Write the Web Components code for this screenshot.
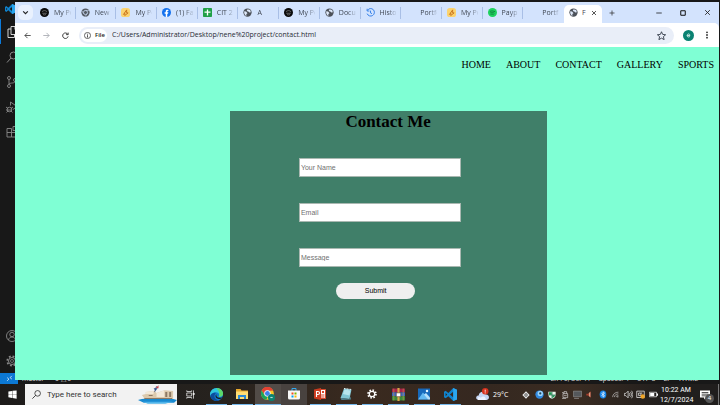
<!DOCTYPE html>
<html lang="en">
<head>
<meta charset="utf-8">
<title>Contact</title>
<style>
body { margin: 0; background: #181818; }
</style>
</head>
<body>
<desk-top></desk-top>
<script>
const ICONS = {
  vscode: '<path fill="#0f84cf" d="M17 0l7 3v18l-7 3L8 15l-5 4-3-2V7l3-2 5 4zM17 7l-6 5 6 5zM3 9v6l3-3z"/><path fill="#2ba6ee" d="M17 0l7 3v18l-7 3z"/>',
  files: '<path fill="none" stroke="#e8e8e8" stroke-width="1.8" d="M8 1h9l5 5v11H8zM16 1v6h6M8 6H2v17h13v-6"/>',
  search: '<circle cx="15" cy="9" r="7" fill="none" stroke="currentColor" stroke-width="2"/><path stroke="currentColor" stroke-width="2" d="M10 14l-8 9"/>',
  git: '<g fill="none" stroke="currentColor" stroke-width="1.8"><circle cx="6" cy="4" r="3"/><circle cx="6" cy="20" r="3"/><circle cx="18" cy="8" r="3"/><path d="M6 7v10M18 11c0 4-9 2-12 5"/></g>',
  debug: '<g fill="none" stroke="currentColor" stroke-width="1.8"><path d="M9 9V2l13 9-8 6"/><circle cx="7" cy="17" r="4.500"/><path d="M0 12l4 3M0 18h12M1 23l3-3M13 23l-3-3M14 12l-4 3"/></g>',
  ext: '<path fill="none" stroke="currentColor" stroke-width="1.8" d="M2 5h9v17H2zM2 13h18v9H11M14 1h8v8h-8z"/>',
  account: '<g fill="none" stroke="currentColor" stroke-width="1.8"><circle cx="12" cy="12" r="11"/><circle cx="12" cy="9" r="4.500"/><path d="M5 20c1-8 13-8 14 0"/></g>',
  gear: '<g fill="none" stroke="currentColor"><circle cx="12" cy="12" r="7" stroke-width="2"/><circle cx="12" cy="12" r="3" stroke-width="1.500"/><circle cx="12" cy="12" r="9.500" stroke-width="3.500" stroke-dasharray="3.730 3.730"/></g>',
  remote: '<path fill="none" stroke="#fff" stroke-width="2.500" d="M4 9l6 5-6 6M20 3l-6 6 6 5"/>',
  chevron: '<path fill="none" stroke="#222" stroke-width="4" d="M4 8l8 8 8-8"/>',
  black: '<circle cx="12" cy="12" r="12" fill="#0a0a0a"/><path fill="none" stroke="#8d8d8d" stroke-width="1.800" d="M5 10c4-4 10-4 14 0M6 14h12M8 17c3 2 5 2 8 0"/>',
  chrome: '<circle cx="12" cy="12" r="11" fill="#555b64"/><circle cx="12" cy="12" r="5.500" fill="#555b64" stroke="#d3e3fd" stroke-width="2"/><path stroke="#d3e3fd" stroke-width="1.500" d="M12 6.500h10M7 15L2 7M16 15l-5 8"/>',
  globe: '<circle cx="12" cy="12" r="11" fill="#4c5159"/><path fill="#dde7f8" d="M4 8l5 2 3 4-3 2v5l-3-2-3-6zM12 3l7 2 2 6-4 1-3-3-4-1z"/>',
  moodle: '<rect width="24" height="24" rx="7" fill="#fbd36f"/><path fill="none" stroke="#c9731b" stroke-width="2.500" d="M6 18L15 5v8h4L10 20v-7"/>',
  facebook: '<circle cx="12" cy="12" r="12" fill="#1371ee"/><path fill="#fff" d="M10 24v-9H7v-4h3V9c0-4 2-5 7-4v3c-3 0-3 0-3 3h3l-1 4h-2v9z"/>',
  sheets: '<rect width="24" height="24" rx="2" fill="#21a047"/><path stroke="#fff" stroke-width="3.500" d="M12 4v16M4 11h16"/>',
  history: '<path fill="none" stroke="#2e7ce8" stroke-width="2.500" d="M4 6a10 10 0 1 1-1 9M3 2v6h6M12 7v6l4 2"/>',
  spotify: '<circle cx="12" cy="12" r="12" fill="#1ed35e"/><path fill="none" stroke="#0c6e38" stroke-width="2" d="M5 9c5-2 10-1 14 1M6 13c5-1 8-1 11 1M7 17c3-1 6-1 8 1"/>',
  close: '<path stroke="#222" stroke-width="3" d="M4 4l16 16M20 4L4 20"/>',
  plus: '<path stroke="#333" stroke-width="3" d="M12 2v20M2 12h20"/>',
  min: '<path stroke="#111" stroke-width="3" d="M1 12h22"/>',
  max: '<path fill="none" stroke="#111" stroke-width="4" d="M3 3h18v18H3z"/>',
  back: '<path fill="none" stroke="#444" stroke-width="3" d="M23 12H3M12 3l-9 9 9 9"/>',
  fwd: '<path fill="none" stroke="#a9acb2" stroke-width="3" d="M1 12h20M12 3l9 9-9 9"/>',
  reload: '<path fill="none" stroke="#333" stroke-width="3.200" d="M20 8a9.500 9.500 0 1 0 1 7M21 2v7h-7"/>',
  info: '<circle cx="12" cy="12" r="10.500" fill="none" stroke="#333" stroke-width="2.500"/><path stroke="#333" stroke-width="3" d="M12 6v3M12 11v8"/>',
  star: '<path fill="none" stroke="#333b48" stroke-width="2.400" d="M12 2l3 7 8 1-6 5 2 8-7-4-7 4 2-8-6-5 8-1z"/>',
  profile: '<circle cx="12" cy="12" r="12" fill="#0a8272"/><path fill="none" stroke="#d5efe9" stroke-width="2" d="M9 12h6c0-5-6-4-6 0s4 4 6 2"/>',
  dots: '<g fill="#333"><circle cx="12" cy="4" r="2.800"/><circle cx="12" cy="12" r="2.800"/><circle cx="12" cy="20" r="2.800"/></g>',
  windows: '<path fill="#fff" d="M1 4l10-1.500V11H1zM12 2.300L23 1v10H12zM1 12h10v9L1 19.500zM12 12h11v11l-11-1.500z"/>',
  find: '<circle cx="15" cy="9" r="7.500" fill="none" stroke="#222" stroke-width="2"/><path stroke="#222" stroke-width="2.200" d="M10 14l-9 9"/>',
  ship: '<path fill="#1789d0" d="M0 15c8-2 30-3 40 0l-3 3H6z"/><path fill="#4fb4ea" d="M5 17h30l-7 2H10z"/><path fill="#dbc9ad" d="M4 10l4-1V7l9-1 2 2 8-3 9 1v8H7z"/><path fill="#f2e8d8" d="M8 7l8-1v3H8zM19 8l8-3v7h-8z"/><path fill="#8d7964" d="M6 13h29v1H7zM28 7h2v5h-2zM32 7h2v5h-2zM11 10h4v1h-4z"/><path fill="none" stroke="#5b6b88" d="M17 7l2-6"/><path fill="#c8424c" d="M18 3l3-3v3z"/><path fill="#31508d" d="M16 3h4l-2 3z"/>',
  taskview: '<g fill="none" stroke="#eee" stroke-width="2"><path d="M2 8h13v8H2zM2 1v3h13V1M2 23v-3h13v3M20 1v22"/></g><path fill="#eee" d="M18 8h5v5h-5z"/>',
  edge: '<circle cx="12" cy="12" r="12" fill="#1277ca"/><path fill="#31c6dc" d="M0 11C2-3 22-4 24 10c0 5-4 6-8 6 3-5-1-8-5-8-5 0-9 2-11 7z"/><path fill="#5cd86a" d="M12 0c8 0 13 6 12 12-1 4-5 4-8 4 3-5 1-11-4-16z"/><path fill="#0c4c9c" d="M11 9c-6 6-2 13 6 14-8 3-16-2-16-9 2-5 6-6 10-5z"/><path fill="#1b1b1b" d="M12 11c-2 5 4 9 11 6-2 3-5 4-8 3-5-1-6-6-3-9z"/>',
  folder: '<path fill="#e9a92c" d="M0 2h9l2 3h13v17H0z"/><path fill="#ffdd74" d="M0 7h24v15H0z"/><path fill="#2d89d3" d="M4 14h16v8h-4v-4H8v4H4z"/>',
  chromeC: '<circle cx="11" cy="11" r="11" fill="#f7c824"/><path fill="#e34133" d="M1 6a11 11 0 0 1 20 0l-10 1-5 6z"/><path fill="#1ca45c" d="M1 6l6 9 5 1-3 6C1 21-2 12 1 6z"/><circle cx="11" cy="11" r="5" fill="#3e80ed" stroke="#fff" stroke-width="1.500"/><circle cx="18" cy="18" r="6" fill="#0a8272"/><path stroke="#b8ddd6" stroke-width="2" d="M16 18h4"/>',
  store: '<path fill="none" stroke="#35a8ec" stroke-width="2" d="M8 7V1h8v6"/><path fill="#f8f8f8" d="M0 5h24v15q0 3-3 3H3q-3 0-3-3z"/><path fill="#f25022" d="M7 9h4v4H7z"/><path fill="#7fba00" d="M13 9h4v4h-4z"/><path fill="#00a4ef" d="M7 15h4v4H7z"/><path fill="#ffb900" d="M13 15h4v4h-4z"/>',
  ppt: '<path fill="#fff" stroke="#d8482c" stroke-width="2" d="M11 3h12v18H11z"/><path fill="#d8482c" d="M16 6h4v4h-4zM14 13h7v2h-7zM14 17h7v2h-7z"/><path fill="#cc3c20" d="M0 3l14-3v24L0 21z"/><path fill="none" stroke="#fff" stroke-width="2.200" d="M5 18V7h3c4 0 4 6 0 6H5"/>',
  notepad: '<path fill="#82c6d4" d="M8 1l15 2-4 19L1 20z"/><path fill="#b7e4ec" d="M9 3l12 2-2 10L6 12z"/><path fill="#4f8795" d="M1 20l18 2 2-5 1 6-19 1z"/><path stroke="#e9f6f8" stroke-width="2" stroke-dasharray="2 1" d="M8 1l15 2"/>',
  cog: '<g fill="none" stroke="#fff"><circle cx="12" cy="12" r="6.500" stroke-width="3"/><circle cx="12" cy="12" r="9.500" stroke-width="4" stroke-dasharray="3.730 3.730"/></g>',
  rar: '<path fill="#a7234a" d="M0 1h24v7H0z"/><path fill="#3c66bb" d="M0 8h24v7H0z"/><path fill="#3a8b3c" d="M0 15h24v8H0z"/><path fill="#d9a548" d="M10 0h4v24h-4zM3 1h1v22H3zM20 1h1v22h-1z"/><path fill="#fff" stroke="#5b351d" d="M8 9h8v7H8z"/>',
  photos: '<path fill="#1769bb" d="M0 1h24v22H0z"/><path fill="#63b9f2" d="M0 23L10 9l11 14z"/><path fill="#b8e0fb" d="M12 13l4-3 8 9v4h-4z"/><circle cx="18" cy="6" r="2.500" fill="#e6f5ff"/>',
  weather: '<path fill="#c6d6f4" d="M4 22c-6-1-4-9 1-8 1-9 12-9 13-2 7-1 8 9 2 10z"/><path fill="#edf3ff" d="M4 22c-3-4 2-7 5-4 4-5 10-1 9 4z"/><circle cx="17" cy="6" r="6" fill="#d6311d"/><path stroke="#fff" stroke-width="1.500" d="M17 3v4M17 8v2"/>',
  diamond: '<path fill="#e8e8e8" d="M12 1l11 11-11 11L1 12z"/><circle cx="12" cy="12" r="5" fill="#555"/><circle cx="12" cy="12" r="2" fill="#fff"/>',
  orb: '<circle cx="12" cy="12" r="11" fill="#3189df"/><circle cx="14" cy="9" r="7" fill="#9bd4fb"/><circle cx="14" cy="9" r="3" fill="#245"/>',
  shield: '<path fill="#eaf7ee" d="M1 2h22v9c0 7-6 10-11 12C7 21 1 18 1 11z"/><path fill="#1d9750" d="M3 4h8v7H3zM13 13h8c0 4-4 6-8 8z"/><path stroke="#164" stroke-width="2" d="M12 2v20M1 12h22"/>',
  usb: '<path fill="none" stroke="#ddd" stroke-width="2" d="M6 8h14v12H6zM9 8V2h8v6M3 5h5M3 23h12M9 14h8"/>',
  screen: '<path fill="#55585b" stroke="#999" stroke-width="1.500" d="M1 3h22v15H1z"/><path fill="#999" d="M3 21h13v2H3z"/>',
  speaker: '<path fill="#a33b2b" d="M1 9h6l9-8v22l-9-8H1z"/><path fill="#d9a084" d="M10 7l5-4v18l-5-4z"/>',
  bt: '<ellipse cx="12" cy="12" rx="10" ry="12" fill="#1684e8"/><path fill="none" stroke="#fff" stroke-width="2" d="M7 8l10 8-5 4V4l5 4-10 8"/>',
  wifi: '<path fill="none" stroke="#ddd" stroke-width="2" d="M2 21C3 10 11 4 22 4M8 21C9 14 14 10 22 10M14 21c0-3 3-5 8-5"/><circle cx="20" cy="20" r="2" fill="#ddd"/>',
  volume: '<path fill="none" stroke="#ddd" stroke-width="2" d="M1 9h4l6-6v18l-6-6H1zM14 8c2 2 2 6 0 8M17 5c4 4 4 10 0 14M20 2c5 6 5 14 0 20"/>',
  sync: '<path fill="none" stroke="#eee" stroke-width="2" d="M2 3h20v17H2zM7 8h6v7H7zM17 8h-4"/><circle cx="18" cy="17" r="6" fill="#f0a62a"/>',
  battery: '<path fill="none" stroke="#eee" stroke-width="2" d="M1 6h19v12H1z"/><path fill="#fff" d="M3 8h11v8H3zM21 9h3v6h-3z"/>',
  note: '<path fill="#fff" d="M0 1h24v17h-9l-5 5v-5H0z"/><path stroke="#333" stroke-width="2" d="M4 6h16M4 10h16M4 14h10"/>'
};

function define(name, css, html) {
  const t = document.createElement('template');
  t.innerHTML = '<style>' + css + '</style>' + html;
  customElements.define(name, class extends HTMLElement {
    constructor() {
      super();
      this.attachShadow({ mode: 'open' }).append(t.content.cloneNode(true));
    }
  });
}

customElements.define('ui-icon', class extends HTMLElement {
  connectedCallback() {
    const w = this.getAttribute('w') || 9;
    const h = this.getAttribute('h') || w;
    const box = this.getAttribute('name') === 'ship' ? '0 0 40 20' : '0 0 24 24';
    const root = this.shadowRoot || this.attachShadow({ mode: 'open' });
    root.innerHTML = `<style>:host{display:block;flex:none}svg{display:block}</style>
      <svg width="${w}" height="${h}" viewBox="${box}" aria-hidden="true">${ICONS[this.getAttribute('name')]}</svg>`;
  }
});

customElements.define('browser-tab', class extends HTMLElement {
  connectedCallback() {
    const icon = this.getAttribute('icon');
    const active = this.hasAttribute('active');
    this.attachShadow({ mode: 'open' }).innerHTML = `<style>
      :host{display:flex;flex:1;min-width:0;align-items:center;box-sizing:border-box;height:12px;padding:0 4px 0 5px;gap:5px;border-right:1px solid #a9bfe6;color:#3f4652}
      :host(.last){border-color:transparent}
      :host([active]){flex:0 0 38px;height:18px;align-self:flex-end;border:0;background:#fff;border-radius:5px 5px 0 0;padding:0 5px 3px;gap:4px}
      .ico{flex:none;width:9px}
      span{flex:1;min-width:0;overflow:hidden;white-space:nowrap;font-size:7px;line-height:10px;-webkit-mask-image:linear-gradient(90deg,#000 50%,#0002)}
      :host([active]) span{-webkit-mask-image:none}
      button{border:0;background:none;padding:0;display:block}
      </style><div class="ico">${icon ? `<ui-icon name="${icon}"></ui-icon>` : ''}</div><span><slot></slot></span>
      ${active ? '<button aria-label="Close tab"><ui-icon name="close" w="6"></ui-icon></button>' : ''}`;
  }
});

define('tab-strip', `
  :host{display:flex;height:21px;background:#d3e3fd;align-items:center;padding-left:3px}
  button{border:0;background:none;padding:0;display:grid;place-items:center}
  .list{width:15px;height:15px;border-radius:5px;background:#e9f1fe;margin-right:2px}
  .tabs{display:flex;flex:1;min-width:0;height:21px;align-items:center}
  .new{width:20px}
  .win{display:flex;margin-left:25px}
  .win button{width:24px;height:20px}`,
  `<button class="list" aria-label="Search tabs"><ui-icon name="chevron" w="7"></ui-icon></button>
  <div class="tabs">
    <browser-tab icon="black">My Po</browser-tab><browser-tab icon="chrome">New T</browser-tab>
    <browser-tab icon="moodle">My Po</browser-tab><browser-tab icon="facebook">(1) Fac</browser-tab>
    <browser-tab icon="sheets">CIT 21</browser-tab><browser-tab icon="globe">A</browser-tab>
    <browser-tab icon="black">My Po</browser-tab><browser-tab icon="globe">Docum</browser-tab>
    <browser-tab icon="history">Histor</browser-tab><browser-tab>Portfo</browser-tab>
    <browser-tab icon="moodle">My Po</browser-tab><browser-tab icon="spotify">Paypla</browser-tab>
    <browser-tab class="last">Portfo</browser-tab><browser-tab icon="globe" active>F</browser-tab>
  </div>
  <button class="new" aria-label="New tab"><ui-icon name="plus" w="6"></ui-icon></button>
  <div class="win">
    <button aria-label="Minimize"><ui-icon name="min" w="6"></ui-icon></button>
    <button aria-label="Maximize"><ui-icon name="max" w="6"></ui-icon></button>
    <button aria-label="Close"><ui-icon name="close" w="7"></ui-icon></button>
  </div>`);

define('tool-bar', `
  :host{display:flex;height:24px;background:#fff;align-items:center;padding:0 8px 0 3px;border-radius:0 5px 0 0}
  button{border:0;background:none;padding:0;display:grid;place-items:center;width:19px}
  .url{flex:1;display:flex;align-items:center;height:17px;border-radius:9px;background:#e9eef8;padding:0 8px 0 2px;margin:0 9px 0 4px}
  .chip{display:flex;align-items:center;gap:4px;width:26px;height:13px;border-radius:7px;background:#fff;padding-left:3px;box-sizing:border-box;font:600 6px/10px "Open Sans",sans-serif;color:#222}
  input{flex:1;min-width:0;border:0;background:none;padding:0 0 0 5px;font:7px/12px "Open Sans",sans-serif;color:#262a33}
  .url>button,.me,.more{width:auto}
  .more{margin-left:9px}`,
  `<button aria-label="Back"><ui-icon name="back" w="7"></ui-icon></button>
  <button aria-label="Forward"><ui-icon name="fwd" w="7"></ui-icon></button>
  <button aria-label="Reload"><ui-icon name="reload" w="7"></ui-icon></button>
  <div class="url"><div class="chip"><ui-icon name="info" w="7"></ui-icon>File</div>
    <input aria-label="Address" value="C:/Users/Administrator/Desktop/nene%20project/contact.html">
    <button aria-label="Bookmark"><ui-icon name="star" w="9"></ui-icon></button></div>
  <button class="me" aria-label="Profile"><ui-icon name="profile" w="11"></ui-icon></button>
  <button class="more" aria-label="Menu"><ui-icon name="dots" w="8"></ui-icon></button>`);

define('site-nav', `
  :host{display:block;font:10px/12px "Liberation Serif",serif}
  nav{display:flex;justify-content:flex-end;gap:15px;padding:12px 5px 0 0}
  a{color:#000;text-decoration:none}`,
  `<nav><a href="#home">HOME</a><a href="#about">ABOUT</a><a href="#contact">CONTACT</a><a href="#gallery">GALLERY</a><a href="#sports">SPORTS</a></nav>`);

customElements.define('form-field', class extends HTMLElement {
  connectedCallback() {
    const label = this.getAttribute('label');
    this.attachShadow({ mode: 'open' }).innerHTML = `<style>
      :host{display:block;width:54%}
      input{display:block;box-sizing:border-box;width:100%;height:19px;border:1px solid #a9b8b1;padding:0 1px;background:#fff;font:7px/10px "Liberation Sans",sans-serif}
      input::placeholder{color:#707070}</style><input type="text" aria-label="${label}" placeholder="${label}">`;
  }
});

define('contact-card', `
  :host{display:block;box-sizing:border-box;width:45%;margin:40px 0 5px 30.5%;background:#407f69;flex:1}
  h1{margin:0;text-align:center;font:bold 17px/21px "Liberation Serif",serif;color:#000}
  form{display:flex;flex-direction:column;align-items:center;gap:26px;width:95%;padding-top:26px}
  button{width:79px;height:16px;margin:-10px 9px 0 0;border:0;border-radius:8px;background:#efefef;color:#000;font:7px/10px "Liberation Sans",sans-serif;padding:0}`,
  `<h1>Contact Me</h1>
  <form><form-field label="Your Name"></form-field><form-field label="Email"></form-field><form-field label="Message"></form-field>
  <button type="button">Submit</button></form>`);

define('browser-window', `
  :host{display:flex;flex-direction:column;background:#d3e3fd;font-family:"Open Sans",sans-serif}
  main{flex:1;display:flex;flex-direction:column;background:#7fffd4}`,
  `<tab-strip></tab-strip><tool-bar></tool-bar><main><site-nav></site-nav><contact-card></contact-card></main>`);

define('code-editor', `
  :host{display:flex;flex-direction:column;background:#181818;color:#8a8a8a;font-family:Roboto,sans-serif}
  .logo{height:19px;box-sizing:border-box;padding:4px 0 0 5px}
  .bar{flex:1;display:flex;flex-direction:column;width:24px}
  .bar button{height:25px;border:0;background:none;padding:0;display:grid;place-items:center;color:inherit;box-sizing:border-box}
  .bar .on{border-left:1px solid #0c7bdc}
  .gap{flex:1}
  .status{display:flex;height:11px;align-items:center;gap:8px;font-size:7px;line-height:12px;color:#d0d0d0;padding-right:8px}
  .remote{width:18px;height:11px;margin-right:-4px;background:#0c78d4;display:grid;place-items:center}`,
  `<div class="logo"><ui-icon name="vscode" w="10"></ui-icon></div>
  <div class="bar"><button class="on" aria-label="Explorer"><ui-icon name="files" w="12"></ui-icon></button>
    <button aria-label="Search"><ui-icon name="search" w="12"></ui-icon></button>
    <button aria-label="Source control"><ui-icon name="git" w="12"></ui-icon></button>
    <button aria-label="Run"><ui-icon name="debug" w="12"></ui-icon></button>
    <button aria-label="Extensions"><ui-icon name="ext" w="12"></ui-icon></button><div class="gap"></div>
    <button aria-label="Account"><ui-icon name="account" w="12"></ui-icon></button>
    <button aria-label="Settings"><ui-icon name="gear" w="12"></ui-icon></button></div>
  <div class="status"><div class="remote"><ui-icon name="remote" w="7"></ui-icon></div><span>master*</span><span>0 △ 0</span><div class="gap"></div>
    <span>Ln 75, Col 41</span><span>Spaces: 4</span><span>UTF-8</span><span>LF</span><span>HTML</span><span>◠</span></div>`);

customElements.define('task-app', class extends HTMLElement {
  connectedCallback() {
    this.attachShadow({ mode: 'open' }).innerHTML = `<style>
      :host{display:block;width:26px}
      button{display:grid;place-items:center;width:26px;height:21px;padding:0 0 1px;border:0;background:none;box-sizing:border-box}
      :host([run]) button{background:linear-gradient(#76b9ed,#76b9ed) bottom/21px 1px no-repeat}
      :host([on]) button{background:linear-gradient(#76b9ed,#76b9ed) bottom/100% 1px no-repeat #514b47}
      :host([lit]) button{background:#48423f}
      </style><button aria-label="${this.getAttribute('label')}"><ui-icon name="${this.getAttribute('icon')}" w="${this.getAttribute('w') || 13}"></ui-icon></button>`;
  }
});

define('task-bar', `
  :host{display:flex;height:21px;align-items:center;color:#fff;font-family:"Open Sans",sans-serif;background:linear-gradient(90deg,#1d1b1a 0,#26221e 30%,#3a2a1f 50%,#352820 68%,#3a2c22 80%,#201e1d 93%)}
  .start{width:25px;padding:0;border:0;background:none;display:grid;place-items:center}
  label{display:flex;align-items:center;width:152px;height:21px;background:#f2f2f2;box-sizing:border-box;padding-left:7px;gap:6px}
  input{flex:1;min-width:0;border:0;background:none;padding:0;font:8px/12px Roboto,sans-serif;color:#333}
  input::placeholder{color:#333;opacity:1}
  .apps{display:flex}
  .sp{flex:1}
  .weather{display:flex;align-items:center;gap:4px;font-size:7px;line-height:10px;width:44px}
  .tray{display:grid;grid-template-columns:repeat(11,1fr);justify-items:center;align-items:center;width:140px}
  .clock{width:32px;text-align:center;font:7px/10px Roboto,sans-serif;white-space:nowrap}
  .notes{position:relative;display:grid;place-items:center;width:26px;height:21px;border-right:1px solid #777;margin-right:1px}
  .badge{position:absolute;right:4px;bottom:2px;width:9px;height:9px;border-radius:50%;background:#555;font-size:6px;line-height:9px;text-align:center}`,
  `<button class="start" aria-label="Start"><ui-icon name="windows" w="9"></ui-icon></button>
  <label><ui-icon name="find" w="9"></ui-icon><input type="search" aria-label="Search" placeholder="Type here to search"><ui-icon name="ship" w="39" h="20"></ui-icon></label>
  <div class="apps"><task-app icon="taskview" w="9" label="Task view"></task-app><task-app run icon="edge" label="Edge"></task-app><task-app run icon="folder" w="12" label="Files"></task-app>
  <task-app on icon="chromeC" w="14" label="Chrome"></task-app><task-app lit icon="store" w="12" label="Store"></task-app><task-app run icon="ppt" w="12" label="PowerPoint"></task-app>
  <task-app run icon="notepad" w="12" label="Notepad"></task-app><task-app run icon="cog" w="10" label="Settings"></task-app><task-app run icon="rar" label="WinRAR"></task-app>
  <task-app run icon="photos" w="12" label="Photos"></task-app><task-app run icon="vscode" label="Code"></task-app></div>
  <div class="sp"></div>
  <div class="weather"><ui-icon name="weather" w="13"></ui-icon><span>29°C</span></div>
  <div class="tray"><ui-icon name="diamond" w="8"></ui-icon><ui-icon name="orb" w="9"></ui-icon><ui-icon name="shield" w="8"></ui-icon><ui-icon name="usb" w="8"></ui-icon><ui-icon name="screen" w="9"></ui-icon><ui-icon name="speaker" w="7"></ui-icon><ui-icon name="bt" w="8" h="9"></ui-icon><ui-icon name="wifi" w="7"></ui-icon><ui-icon name="volume" w="9"></ui-icon><ui-icon name="sync" w="9"></ui-icon><ui-icon name="battery" w="9"></ui-icon></div>
  <div class="clock"><div>10:22 AM</div><div>12/7/2024</div></div>
  <div class="notes"><ui-icon name="note" w="10"></ui-icon><span class="badge">4</span></div>`);

define('desk-top', `
  :host{display:flex;flex-direction:column;height:100vh;overflow:hidden}
  .work{position:relative;flex:1;display:flex;min-height:0}
  code-editor{flex:1}
  browser-window{position:absolute;inset:2px 1px 4px 15px}`,
  `<div class="work"><code-editor></code-editor><browser-window></browser-window></div><task-bar></task-bar>`);
</script>
</body>
</html>
